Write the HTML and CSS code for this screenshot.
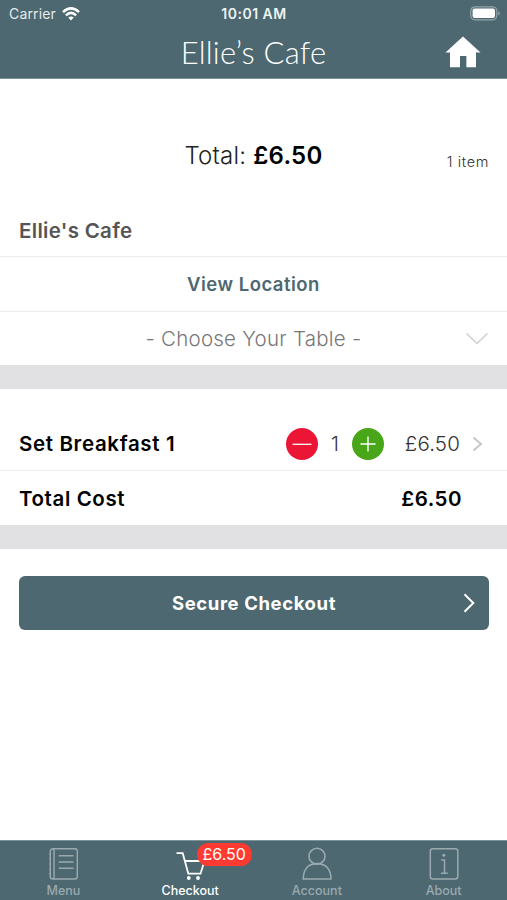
FILE: index.html
```
<!DOCTYPE html>
<html lang="en">
<head>
<meta charset="utf-8">
<title>Ellie's Cafe</title>
<link rel="stylesheet" href="styles.css">
</head>
<body>
<div class="app">
  <header class="top">
    <div class="status">
      <div class="carrier"><span class="carrier-name">Carrier</span>
        <svg class="wifi" width="18" height="14" viewBox="0 0 18 14"><g fill="none" stroke="#fff" stroke-width="2.5"><path d="M1 5.2Q9-2.4 17 5.2"/><path d="M3.9 8.3Q9 3.5 14.1 8.3"/></g><path d="M6.2 10.6Q9 8.2 11.8 10.6L9 13.6Z" fill="#fff"/></svg>
      </div>
      <span class="clock">10:01 AM</span>
      <svg class="battery" width="31" height="15" viewBox="0 0 31 15"><rect x=".8" y=".8" width="26" height="13" rx="4" fill="none" stroke="#91a4aa" stroke-width="1.2"/><rect x="2.6" y="2.6" width="22.4" height="9.4" rx="2" fill="#fff"/><path d="M28.4 5Q31 7.3 28.4 9.6Z" fill="#a4b3b8"/></svg>
    </div>
    <div class="bar">
      <h1 class="title">Ellie’s Cafe</h1>
      <svg class="home" width="36" height="32" viewBox="0 0 36 32"><path d="M18 .5 35.5 16.5H31V31.3H21.4V20H15V31.3H5V16.5H.5Z" fill="#fff"/></svg>
    </div>
  </header>
  <main>
    <section class="summary"><span class="total">Total: <b>£6.50</b></span><span class="count">1 item</span></section>
    <div class="row venue"><span class="venue-name">Ellie's Cafe</span></div>
    <div class="row location"><span class="location-text">View Location</span></div>
    <div class="row table"><span class="table-text">- Choose Your Table -</span>
      <svg class="down" width="24" height="14" viewBox="0 0 24 14"><path d="M1.5 1.5 12 11.5 22.5 1.5" fill="none" stroke="#d0d0d2" stroke-width="1.6"/></svg></div>
    <div class="gap"></div>
    <div class="row item"><span class="item-name">Set Breakfast 1</span>
      <svg class="round" width="32" height="32" viewBox="0 0 32 32"><circle cx="16" cy="16" r="16" fill="#eb1536"/><path d="M6.5 16.3H25.5" stroke="#fff" stroke-width="1.3"/></svg>
      <span class="qty">1</span>
      <svg class="round" width="32" height="32" viewBox="0 0 32 32"><circle cx="16" cy="16" r="16" fill="#48a619"/><path d="M8.5 16H23.5M16 8.5V23.5" stroke="#fff" stroke-width="1.4"/></svg>
      <span class="price">£6.50</span>
      <svg class="next" width="11" height="16" viewBox="0 0 11 16"><path d="M1.5 1.5 9 8 1.5 14.5" fill="none" stroke="#c4c4c7" stroke-width="1.8"/></svg>
    </div>
    <div class="row cost"><span class="cost-name">Total Cost</span><b class="cost-value">£6.50</b></div>
    <div class="gap"></div>
    <button class="checkout"><span class="checkout-text">Secure Checkout</span>
      <svg class="go" width="12" height="20" viewBox="0 0 12 20"><path d="M1.5 1.3 10.3 10 1.5 18.7" fill="none" stroke="#fff" stroke-width="2"/></svg></button>
  </main>
  <nav class="tabs">
    <a class="tab"><svg width="32" height="34" viewBox="0 0 32 34"><g fill="none" stroke="currentColor" stroke-width="1.4"><rect x="3.3" y="1.7" width="27" height="30.3" rx="2.5"/><path d="M7 2V32M11.8 8.8H26.5M11.8 15H26.5M11.8 21.2H26.5"/><path d="M2 7H4M2 12H4M2 17H4M2 22H4M2 27H4" stroke-width="1"/></g></svg><span class="menu">Menu</span></a>
    <a class="tab active"><svg width="32" height="34" viewBox="0 0 32 34"><g fill="none" stroke="currentColor" stroke-width="1.8"><path d="M2.5 6.2H8.7L14.3 26.7H26.5L30.5 14H11"/></g><circle cx="14.8" cy="31" r="1.9" fill="currentColor"/><circle cx="24" cy="31" r="1.9" fill="currentColor"/></svg><span class="badge">£6.50</span><span class="checkout-tab">Checkout</span></a>
    <a class="tab"><svg width="32" height="34" viewBox="0 0 32 34"><g fill="none" stroke="currentColor" stroke-width="1.6"><ellipse cx="16" cy="9.2" rx="8" ry="7.9"/><path d="M2.3 32C2.3 22 7.5 16.6 16 16.6S30 22 30 32Z"/></g></svg><span class="account">Account</span></a>
    <a class="tab"><svg width="32" height="34" viewBox="0 0 32 34"><g fill="none" stroke="currentColor" stroke-width="1.5"><rect x="2.3" y="1.7" width="27.5" height="30.3" rx="2.5"/><path d="M13.2 13H16.5V26M13 26.3H19.7"/></g><circle cx="15.8" cy="8.3" r="1.5" fill="currentColor"/></svg><span class="about">About</span></a>
  </nav>
</div>
</body>
</html>
```
FILE: styles.css
```
* { box-sizing: border-box; }
body { margin: 0; background: #fff; color: #000; font-family: Inter, "Liberation Sans", sans-serif; }
svg { display: block; flex: none; }
span, b { white-space: nowrap; }
.app { width: 507px; height: 900px; display: flex; flex-direction: column; overflow: hidden; }
main { flex: 1; }
.top { height: 79px; background: #4d6870; color: #fff; border-bottom: 1px solid #7895a0; }
.status { height: 27px; display: grid; grid-template-columns: 1fr auto 1fr; align-items: center; padding: 0 6px 0 9px; }
.carrier { display: flex; align-items: center; gap: 6px; }
.carrier-name { font-size: 14px; letter-spacing: .15px; color: #e5ebec; }
.clock { font-size: 14px; font-weight: 600; letter-spacing: .5px; margin-right: 2px; color: #edf2f3; }
.battery { justify-self: end; }
.bar { height: 49px; display: grid; grid-template-columns: 1fr auto 1fr; align-items: center; padding-right: 26px; padding-left: 26px; }
.title { grid-column: 2; margin: 0; padding-top: 2px; font-family: Lato, sans-serif; font-size: 31px; font-weight: 300; letter-spacing: .2px; line-height: 47px; }
.home { justify-self: end; }
.summary { height: 124px; display: grid; grid-template-columns: 1fr auto 1fr; align-items: center; padding: 28px 19px 0; }
.total { grid-column: 2; font-size: 24px; font-weight: 300; letter-spacing: .22px; color: #222; }
.total b { font-weight: 600; color: #000; }
.count { justify-self: end; padding-top: 12px; font-size: 14.5px; font-weight: 300; letter-spacing: .65px; margin-right: -1px; color: #333; }
.row { height: 54px; display: flex; align-items: center; padding: 0 19px; border-bottom: 1px solid #ebebed; }
.venue { padding-top: 2px; }
.venue-name { font-size: 20.5px; font-weight: 600; letter-spacing: .3px; color: #555; }
.location { justify-content: center; height: 55px; }
.location-text { font-size: 18.5px; font-weight: 600; letter-spacing: .5px; color: #4d6870; }
.table { display: grid; grid-template-columns: 24px 1fr 24px; height: 53px; padding: 0 18px; border: 0; }
.table-text { grid-column: 2; text-align: center; font-size: 20.5px; font-weight: 300; letter-spacing: .25px; color: #777; }
.gap { height: 24px; background: #e1e1e3; }
.item { height: 82px; padding-top: 28px; }
.item-name { width: 267px; font-size: 20.5px; font-weight: 600; letter-spacing: .65px; }
.qty { width: 34px; text-align: center; font-size: 20px; font-weight: 300; color: #333; }
.price { width: 76px; text-align: right; font-size: 20.5px; font-weight: 300; letter-spacing: .15px; color: #333; margin-right: 12px; }
.cost { justify-content: space-between; padding-right: 45px; border: 0; }
.cost-name { font-size: 20.5px; font-weight: 600; letter-spacing: .6px; }
.cost-value { font-size: 20.5px; font-weight: 600; letter-spacing: .5px; }
.checkout { display: grid; grid-template-columns: 12px 1fr 12px; align-items: center; width: 470px; height: 54px; margin: 27px 0 0 19px; padding: 0 14px; border: 0; border-radius: 6px; background: #4d6870; color: #fff; font: inherit; }
.checkout-text { grid-column: 2; font-size: 18.5px; font-weight: 700; letter-spacing: .6px; }
.tabs { height: 60px; display: grid; grid-template-columns: repeat(4, 1fr); background: #4d6870; border-top: 1px solid #7c9198; }
.tab { position: relative; display: flex; flex-direction: column; align-items: center; padding-top: 6px; color: #9aaab0; font-size: 12.5px; font-weight: 500; line-height: 20px; }
.active { color: #fff; }
.badge { position: absolute; left: 70px; top: 2px; width: 55px; height: 23px; border-radius: 12px; background: #ff3a30; color: #fff; text-align: center; font-size: 16px; font-weight: 400; line-height: 23px; }
```
